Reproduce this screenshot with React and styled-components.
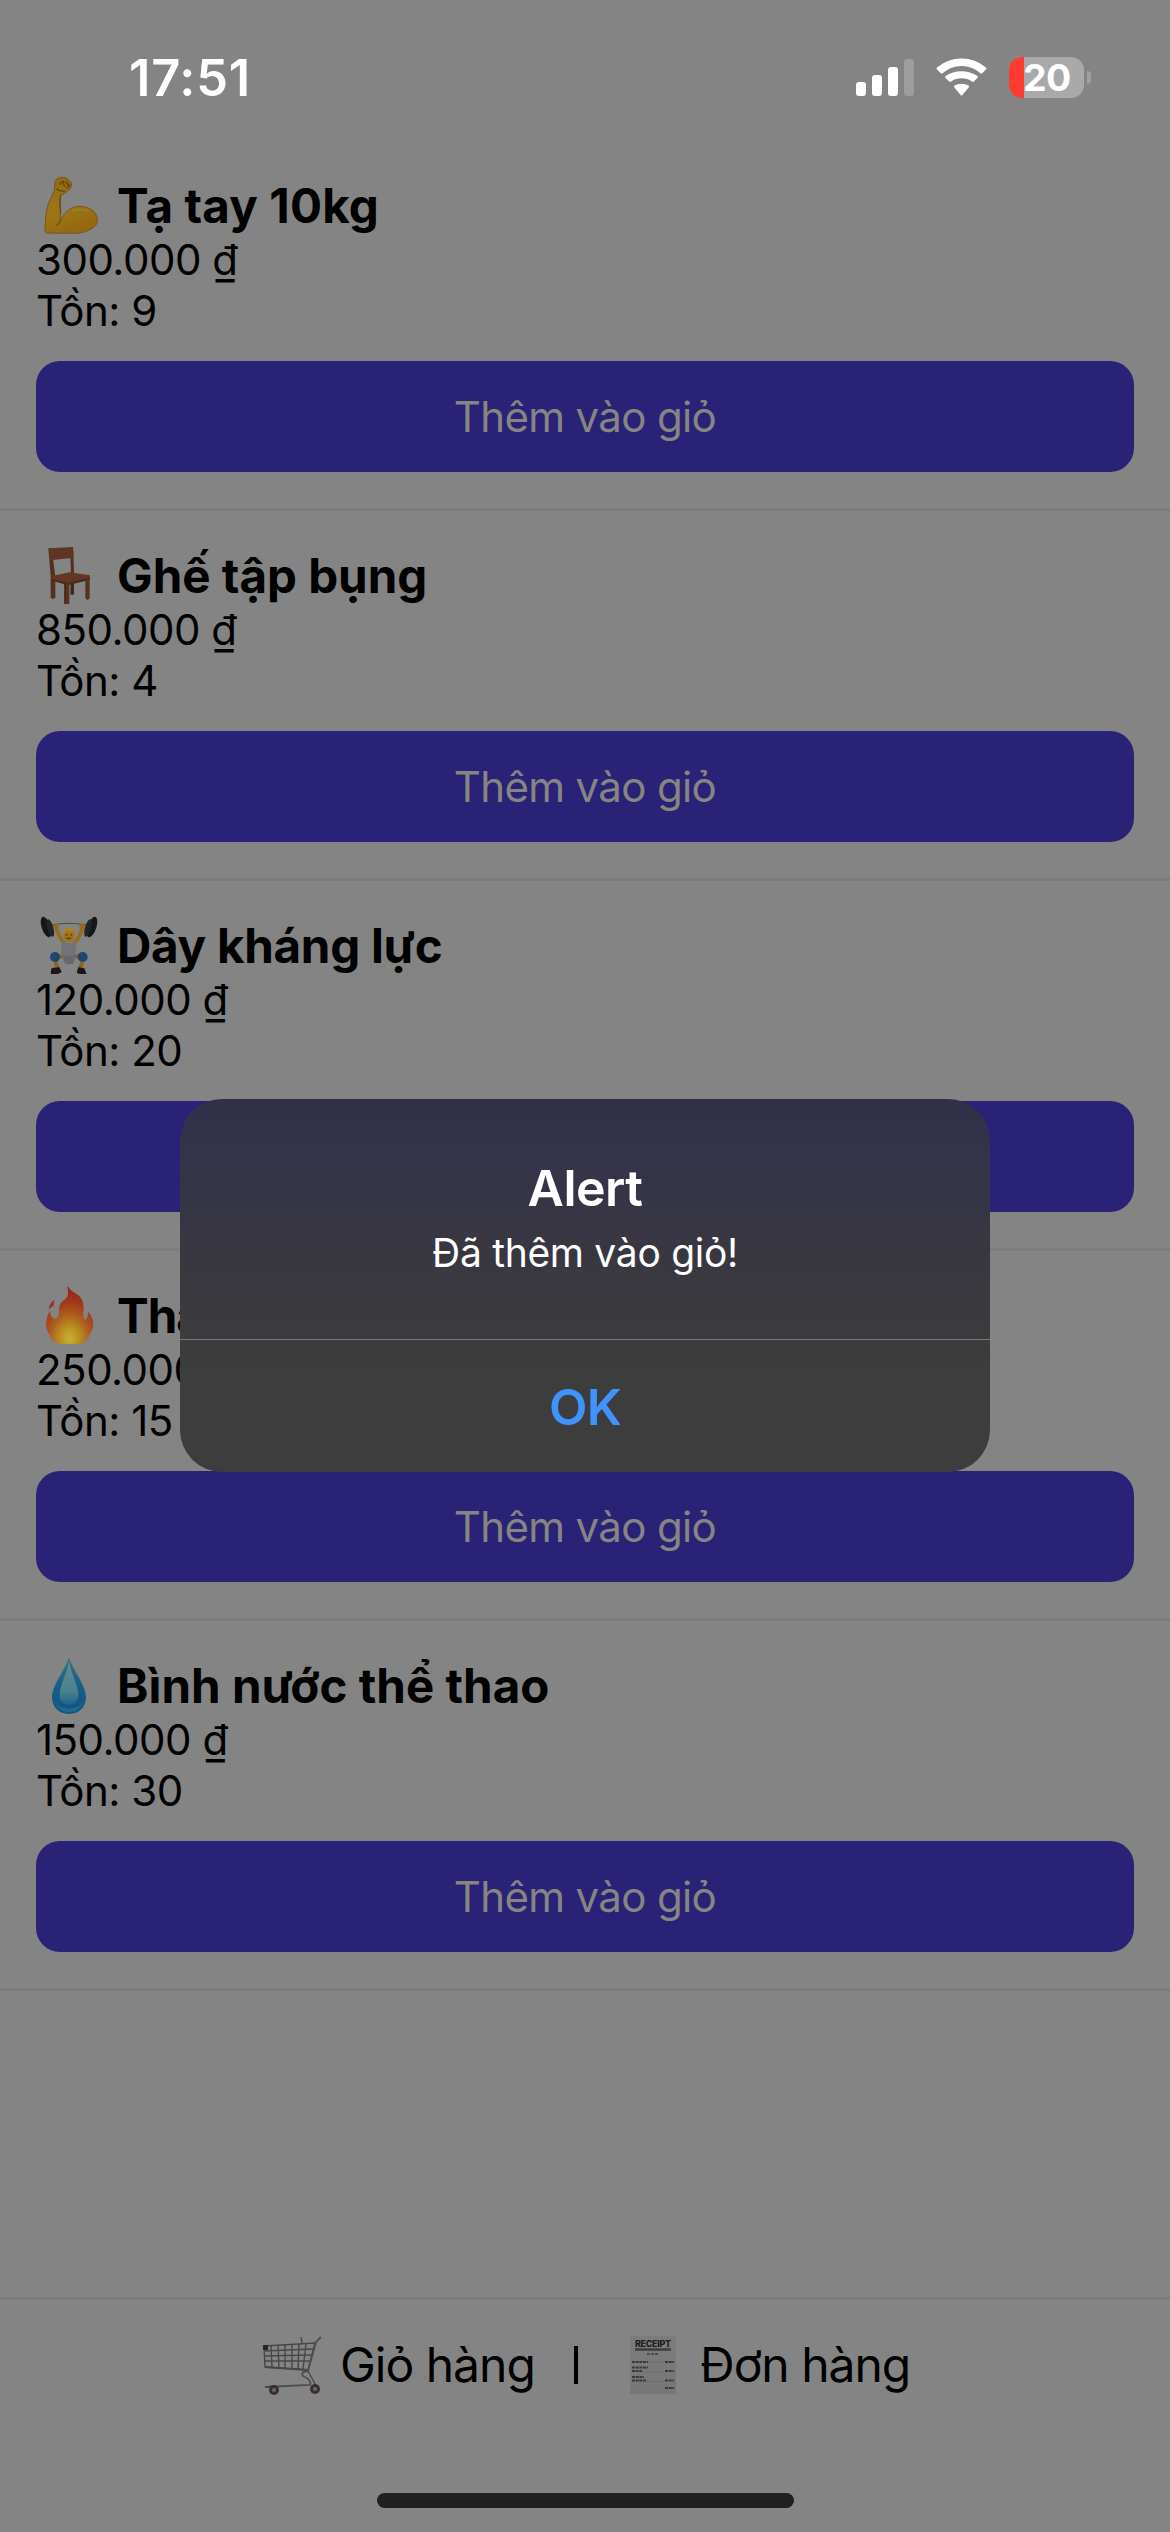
import React from "react";
import styled, { createGlobalStyle } from "styled-components";

const GlobalStyle = createGlobalStyle`
  * { box-sizing: border-box; }
  html, body { margin: 0; padding: 0; background: #848484; }
  body { font-family: Inter, "Liberation Sans", sans-serif; color: #000; }
`;

const Screen = styled.div`
  position: relative;
  display: flex;
  flex-direction: column;
  width: 1170px;
  height: 2532px;
  background: #848484;
  overflow: hidden;
`;

const StatusBar = styled.header`
  flex: none;
  display: flex;
  justify-content: space-between;
  height: 141px;
  padding: 57px 79px 0 129px;
  color: #fff;
`;

const Clock = styled.div`
  height: 41px;
  font-size: 50.5px;
  font-weight: 600;
  line-height: 42px;
  letter-spacing: 0.8px;
`;

const StatusIcons = styled.div`
  display: flex;
  height: 41px;
`;

const SignalIcon = styled.svg`
  width: 60px;
  height: 41px;
  margin-right: 20px;
`;

const WifiIcon = styled.svg`
  width: 52px;
  height: 41px;
  margin-right: 21px;
`;

const Battery = styled.div`
  display: flex;
  align-items: center;
  gap: 3px;
`;

const BatteryBody = styled.div`
  width: 75px;
  height: 41px;
  border-radius: 13px;
  background: linear-gradient(to right, #ff3b30 15px, #a9a9a9 15px);
  font-size: 37.5px;
  font-weight: 700;
  line-height: 41px;
  letter-spacing: -0.6px;
  padding-left: 14px;
`;

const BatteryTip = styled.div`
  width: 4px;
  height: 13px;
  border-radius: 0 4px 4px 0;
  background: #a0a0a0;
`;

const List = styled.main`
  flex: 1;
`;

const Item = styled.article`
  height: 370px;
  padding: 35px 36px 36px;
  border-bottom: 3px solid #7c7c7c;
`;

const ItemTitle = styled.h2`
  display: flex;
  gap: 17px;
  height: 58px;
  margin: 0;
  font-size: 47.5px;
  font-weight: 700;
  line-height: 59px;
  letter-spacing: ${(p) => p.$tracking}px;
  white-space: nowrap;
`;

const Emoji = styled.svg`
  flex: none;
  width: 64px;
  height: 58px;
`;

const ItemLine = styled.p`
  margin: 0;
  font-size: 42px;
  line-height: 51px;
  letter-spacing: -0.5px;
  white-space: nowrap;
`;

const AddButton = styled.button`
  display: flex;
  align-items: center;
  justify-content: center;
  width: 100%;
  height: 111px;
  margin-top: 25px;
  padding: 0 0 1px;
  border: 0;
  border-radius: 24px;
  background: #292277;
  color: #868583;
  font: 400 42px/51px Inter, "Liberation Sans", sans-serif;
  letter-spacing: -0.65px;
`;

const AddLabel = styled.span`
  visibility: ${(p) => (p.$covered ? "hidden" : "visible")};
`;

const Footer = styled.footer`
  flex: none;
  display: flex;
  flex-direction: column;
  align-items: center;
  height: 235px;
  border-top: 3px solid #7c7c7c;
  padding-top: 36px;
`;

const FooterLinks = styled.nav`
  display: flex;
  align-items: flex-start;
  width: 644px;
  height: 58px;
  font-size: 48px;
  line-height: 57px;
  letter-spacing: -1px;
  white-space: nowrap;
`;

const FooterLink = styled.span`
  flex: none;
  display: flex;
  gap: ${(p) => p.$gap}px;
  width: ${(p) => p.$width}px;
`;

const FooterIcon = styled.svg`
  flex: none;
  width: ${(p) => p.$width}px;
  height: 60px;
`;

const Divider = styled.span`
  flex: none;
  width: 4px;
  height: 38px;
  margin: 10px 52px 0 1px;
  background: #000;
`;

const HomeIndicator = styled.div`
  width: 417px;
  height: 15px;
  margin-top: 99px;
  border-radius: 8px;
  background: #202020;
`;

const Overlay = styled.div`
  position: absolute;
  inset: 0;
  display: flex;
  align-items: center;
  justify-content: center;
  padding-top: 39px;
`;

const Dialog = styled.div`
  display: flex;
  flex-direction: column;
  width: 810px;
  height: 373px;
  border-radius: 42px;
  overflow: hidden;
  background: linear-gradient(#313049 0%, #34334a 14%, #383741 40%, #3b3b3e 60%, #3d3d3d 75%, #3d3d3d 100%);
  text-align: center;
`;

const DialogBody = styled.div`
  height: 241px;
  padding-top: 58px;
  border-bottom: 1px solid #79797b;
`;

const DialogTitle = styled.h1`
  margin: 0;
  color: #fff;
  font-size: 50px;
  font-weight: 600;
  line-height: 62px;
  letter-spacing: -0.5px;
`;

const DialogText = styled.p`
  margin: 10px 0 0;
  color: #fff;
  font-size: 39px;
  line-height: 48px;
  letter-spacing: -0.3px;
`;

const DialogButton = styled.button`
  flex: 1;
  padding: 2px 0 0;
  border: 0;
  background: transparent;
  color: #4092ff;
  font: 600 50px/60px Inter, "Liberation Sans", sans-serif;
  letter-spacing: -0.8px;
`;

const Biceps = () => (
  <Emoji viewBox="18 33 192 174">
    <defs>
      <linearGradient id="skin" x1="0" y1="0" x2="0.4" y2="1">
        <stop offset="0" stopColor="#8c6718" />
        <stop offset="0.6" stopColor="#9c7719" />
        <stop offset="1" stopColor="#946911" />
      </linearGradient>
    </defs>
    <path d="M74 54 Q76 38 98 37 Q112 37 124 53 Q128 68 112 79 Q104 87 93 90 Q88 108 92 128 L91 168 Q103 138 132 126 Q168 118 192 140 Q209 160 199 179 Q184 198 146 205 Q95 205 49 204 Q43 201 45 190 Q46 148 54 118 Q66 93 74 74Z" fill="url(#skin)" stroke="#76500f" strokeWidth="2.5" />
    <path d="M90 60 Q92 48 101 50 Q99 61 105 65 M107 50 Q116 54 114 64 M120 58 Q118 68 108 70 M80 72 Q91 80 105 78" fill="none" stroke="#684313" strokeWidth="4" />
    <path d="M91 168 Q86 178 80 181 M92 90 Q87 113 92 145" fill="none" stroke="#6e4911" strokeWidth="4" />
    <path d="M125 139 Q151 128 176 138" fill="none" stroke="#ad8931" strokeWidth="7" opacity=".35" />
  </Emoji>
);

const Chair = () => (
  <Emoji viewBox="18 33 192 174">
    <path d="M122 144H132V177L127 181L121 177Z" fill="#42271d" />
    <path d="M55 40H65L76 124V188L69 192L62 188V124Z" fill="#54301f" />
    <path d="M120 37L129 36L132 116L123 117Z" fill="#532d20" />
    <path d="M56 40L129 36L131 68L60 76Z" fill="#603524" />
    <path d="M65 123L119 112L180 121L178 134L113 149L66 134Z" fill="#633823" />
    <path d="M66 131L112 144L180 127V134L113 151L66 137Z" fill="#4a2a1b" />
    <path d="M103 144H118V206L110 209L103 206ZM166 130H179V190L173 195L166 190Z" fill="#59321f" />
    <path d="M103 145H108V207L103 205Z" fill="#482718" />
  </Emoji>
);

const Lifter = () => (
  <Emoji viewBox="18 33 192 174">
    <path d="M58 61Q115 49 176 61" fill="none" stroke="#4e4946" strokeWidth="3" />
    <path d="M78 68Q88 97 104 118M158 68Q149 97 130 118" fill="none" stroke="#966d1a" strokeWidth="11" />
    <path d="M96 108Q117 122 136 108L139 130Q137 148 134 162Q131 177 116 179Q101 176 98 160Q94 146 93 130Z" fill="#727378" />
    <path d="M98 157Q82 149 77 157Q76 176 84 192M135 157Q152 148 157 157Q158 175 149 191" fill="none" stroke="#8c6517" strokeWidth="12" />
    <path d="M98 148Q117 160 137 148L129 177H106Z" fill="#66686e" />
    <circle cx="75" cy="156" r="15" fill="#1d4672" />
    <circle cx="158" cy="156" r="15" fill="#1d4672" />
    <path d="M65 189L88 187L95 200Q91 208 63 209Q61 199 65 189ZM145 187L163 190L170 208Q146 210 140 202Z" fill="#16181b" />
    <ellipse cx="117" cy="91" rx="17" ry="21" fill="#9f7319" />
    <path d="M100 90Q98 71 111 68Q135 63 134 89L130 79Q119 82 109 77Z" fill="#ae8426" />
    <path d="M110 87v5M124 87v5" stroke="#5c3f10" strokeWidth="4" />
    <path d="M107 98Q116 108 126 98Z" fill="#5c3a12" />
    <ellipse cx="48" cy="66" rx="13" ry="32" transform="rotate(-18 48 66)" fill="#151618" />
    <ellipse cx="61" cy="69" rx="9" ry="27" transform="rotate(-16 61 69)" fill="#222426" />
    <ellipse cx="186" cy="66" rx="13" ry="32" transform="rotate(18 186 66)" fill="#151618" />
    <ellipse cx="174" cy="69" rx="9" ry="27" transform="rotate(16 174 69)" fill="#222426" />
    <circle cx="79" cy="64" r="8" fill="#986815" />
    <circle cx="156" cy="64" r="8" fill="#986815" />
  </Emoji>
);

const Fire = () => (
  <Emoji viewBox="18 33 192 174">
    <defs>
      <radialGradient id="flame" cx="0.5" cy="0.9" r="0.85">
        <stop offset="0" stopColor="#c9b036" />
        <stop offset="0.25" stopColor="#b98f20" />
        <stop offset="0.5" stopColor="#ad5b1e" />
        <stop offset="0.75" stopColor="#a0381c" />
        <stop offset="1" stopColor="#94261b" />
      </radialGradient>
    </defs>
    <path d="M116 35Q118 45 137 55Q166 72 160 112Q158 132 165 134Q175 130 174 110Q194 131 188 160Q183 180 166 192L181 186Q166 204 137 208H96Q69 205 56 184L73 192Q51 179 48 151Q48 126 60 107Q61 128 74 131Q88 133 87 102Q88 84 103 74Q119 64 112 36Z" fill="url(#flame)" />
    <path d="M56 103Q58 84 73 75L70 93Z" fill="#973024" />
  </Emoji>
);

const Drop = () => (
  <Emoji viewBox="18 33 192 174">
    <defs>
      <linearGradient id="dropOuter" x1="0" y1="0" x2="0" y2="1">
        <stop offset="0" stopColor="#3a7581" />
        <stop offset="0.5" stopColor="#175f87" />
        <stop offset="1" stopColor="#15547f" />
      </linearGradient>
      <linearGradient id="dropInner" x1="0" y1="0" x2="0" y2="1">
        <stop offset="0" stopColor="#6e8d92" />
        <stop offset="0.7" stopColor="#50858d" />
        <stop offset="1" stopColor="#1c668d" />
      </linearGradient>
    </defs>
    <path d="M117 36C126 72 168 119 168 157C168 187 147 207 117 207C87 207 66 187 66 157C66 119 108 72 117 36Z" fill="url(#dropOuter)" />
    <path d="M117 48C122 84 145 119 145 151C145 169 134 179 117 179C99 179 89 169 89 151C89 119 112 84 117 48Z" fill="url(#dropInner)" opacity=".9" />
    <path d="M74 171Q87 201 117 202Q147 201 160 171Q148 190 117 191Q86 190 74 171Z" fill="#2679a1" opacity=".6" />
  </Emoji>
);

const Cart = () => (
  <FooterIcon $width={60} viewBox="0 0 60 60">
    <g fill="none" stroke="#45484a" strokeWidth="1.4">
      <path d="M1 10L52 7L45 34L2 31Z" />
      <path d="M1 15L50 13M1 20L49 19M2 25L48 25M8 10L9 31M15 9L16 32M22 9L22 32M29 8L29 33M36 8L35 33M43 8L40 33" />
      <path d="M2 31L45 34" strokeWidth="2" />
      <path d="M58 1L53 6L45 35Q37 36 40 40Q49 44 47 49L2 51" strokeWidth="1.8" stroke="#4c4e50" />
      <path d="M38 1L39 7M45 35L51 46L53 51M2 51L11 50L13 54" />
    </g>
    <path d="M0 9h5v5H0Z" fill="#252729" />
    <circle cx="11" cy="54" r="5" fill="#383030" />
    <circle cx="52" cy="53" r="5" fill="#383030" />
    <circle cx="11" cy="54" r="2" fill="#716563" />
    <circle cx="52" cy="53" r="2" fill="#716563" />
  </FooterIcon>
);

const Receipt = () => (
  <FooterIcon $width={46} viewBox="0 0 46 60">
    <defs>
      <linearGradient id="paper" x1="0" y1="0" x2="0" y2="1">
        <stop offset="0" stopColor="#7c7c7c" />
        <stop offset="1" stopColor="#777777" />
      </linearGradient>
    </defs>
    <rect width="46" height="58" fill="url(#paper)" />
    <text x="23" y="10.5" textAnchor="middle" textLength="36" fontFamily="Inter, sans-serif" fontSize="9" fontWeight="800" letterSpacing="0" fill="#202020">RECEIPT</text>
    <path d="M5 13.5H41" stroke="#3d3d3d" strokeWidth="2.5" />
    <path d="M17 18H28" stroke="#4c4c4c" strokeWidth="2" strokeDasharray="3 1" />
    <g stroke="#393939" strokeWidth="2" strokeDasharray="3 .7">
      <path d="M2 26H18M35 26H44M2 31.5H18M2 35H12M35 35H44M2 41H14M2 44.5H16M35 44.5H44M35 52H44" />
    </g>
    <path d="M18 26H34M13 36H34M17 45.5H34" stroke="#606060" strokeDasharray="1 1" />
  </FooterIcon>
);

const products = [
  { icon: Biceps, name: "Tạ tay 10kg", price: "300.000 ₫", stock: 9, tracking: 0.15 },
  { icon: Chair, name: "Ghế tập bụng", price: "850.000 ₫", stock: 4, tracking: 0 },
  { icon: Lifter, name: "Dây kháng lực", price: "120.000 ₫", stock: 20, tracking: -0.25, covered: true },
  { icon: Fire, name: "Thảm yoga", price: "250.000 ₫", stock: 15, tracking: -1 },
  { icon: Drop, name: "Bình nước thể thao", price: "150.000 ₫", stock: 30, tracking: 0.05 },
];

export default function App() {
  return (
    <Screen>
      <GlobalStyle />
      <StatusBar>
        <Clock>17:51</Clock>
        <StatusIcons>
          <SignalIcon viewBox="0 0 60 41">
            <rect x="0" y="25" width="10" height="14" rx="3" fill="#fff" />
            <rect x="16" y="18" width="10" height="21" rx="3" fill="#fff" />
            <rect x="32" y="10" width="10" height="29" rx="3" fill="#fff" />
            <rect x="48" y="2" width="10" height="37" rx="3" fill="#9d9d9d" />
          </SignalIcon>
          <WifiIcon viewBox="0 0 52 41">
            <g fill="#fff">
              <path d="M.8 12.2Q0 11.4 1 10.4Q12 1.6 25.5 1.6Q39 1.6 50 10.4Q51 11.4 50.2 12.2L46.2 16.2Q45.4 17 44.4 16.2Q36 9 25.5 9Q15 9 6.6 16.2Q5.6 17 4.8 16.2Z" />
              <path d="M9.4 20.8Q8.6 20 9.6 19Q16.5 14.2 25.5 14.2Q34.5 14.2 41.4 19Q42.4 20 41.6 20.8L37.8 24.6Q37 25.4 36 24.6Q31.5 21.3 25.5 21.3Q19.5 21.3 15 24.6Q14 25.4 13.2 24.6Z" />
              <path d="M18.2 30.2Q17.3 29.3 18.5 28.5Q21.6 26.8 25.5 26.8Q29.4 26.8 32.5 28.5Q33.7 29.3 32.8 30.2L26.4 38Q25.5 39 24.6 38Z" />
            </g>
          </WifiIcon>
          <Battery>
            <BatteryBody>20</BatteryBody>
            <BatteryTip />
          </Battery>
        </StatusIcons>
      </StatusBar>

      <List>
        {products.map(({ icon: Icon, name, price, stock, tracking, covered }) => (
          <Item key={name}>
            <ItemTitle $tracking={tracking}>
              <Icon />
              <span>{name}</span>
            </ItemTitle>
            <ItemLine>{price}</ItemLine>
            <ItemLine>Tồn: {stock}</ItemLine>
            <AddButton>
              <AddLabel $covered={covered}>Thêm vào giỏ</AddLabel>
            </AddButton>
          </Item>
        ))}
      </List>

      <Footer>
        <FooterLinks>
          <FooterLink $gap={17} $width={310}>
            <Cart />
            <span>Giỏ hàng</span>
          </FooterLink>
          <Divider />
          <FooterLink $gap={24} $width={277}>
            <Receipt />
            <span>Đơn hàng</span>
          </FooterLink>
        </FooterLinks>
        <HomeIndicator />
      </Footer>

      <Overlay>
        <Dialog role="alertdialog">
          <DialogBody>
            <DialogTitle>Alert</DialogTitle>
            <DialogText>Đã thêm vào giỏ!</DialogText>
          </DialogBody>
          <DialogButton>OK</DialogButton>
        </Dialog>
      </Overlay>
    </Screen>
  );
}
